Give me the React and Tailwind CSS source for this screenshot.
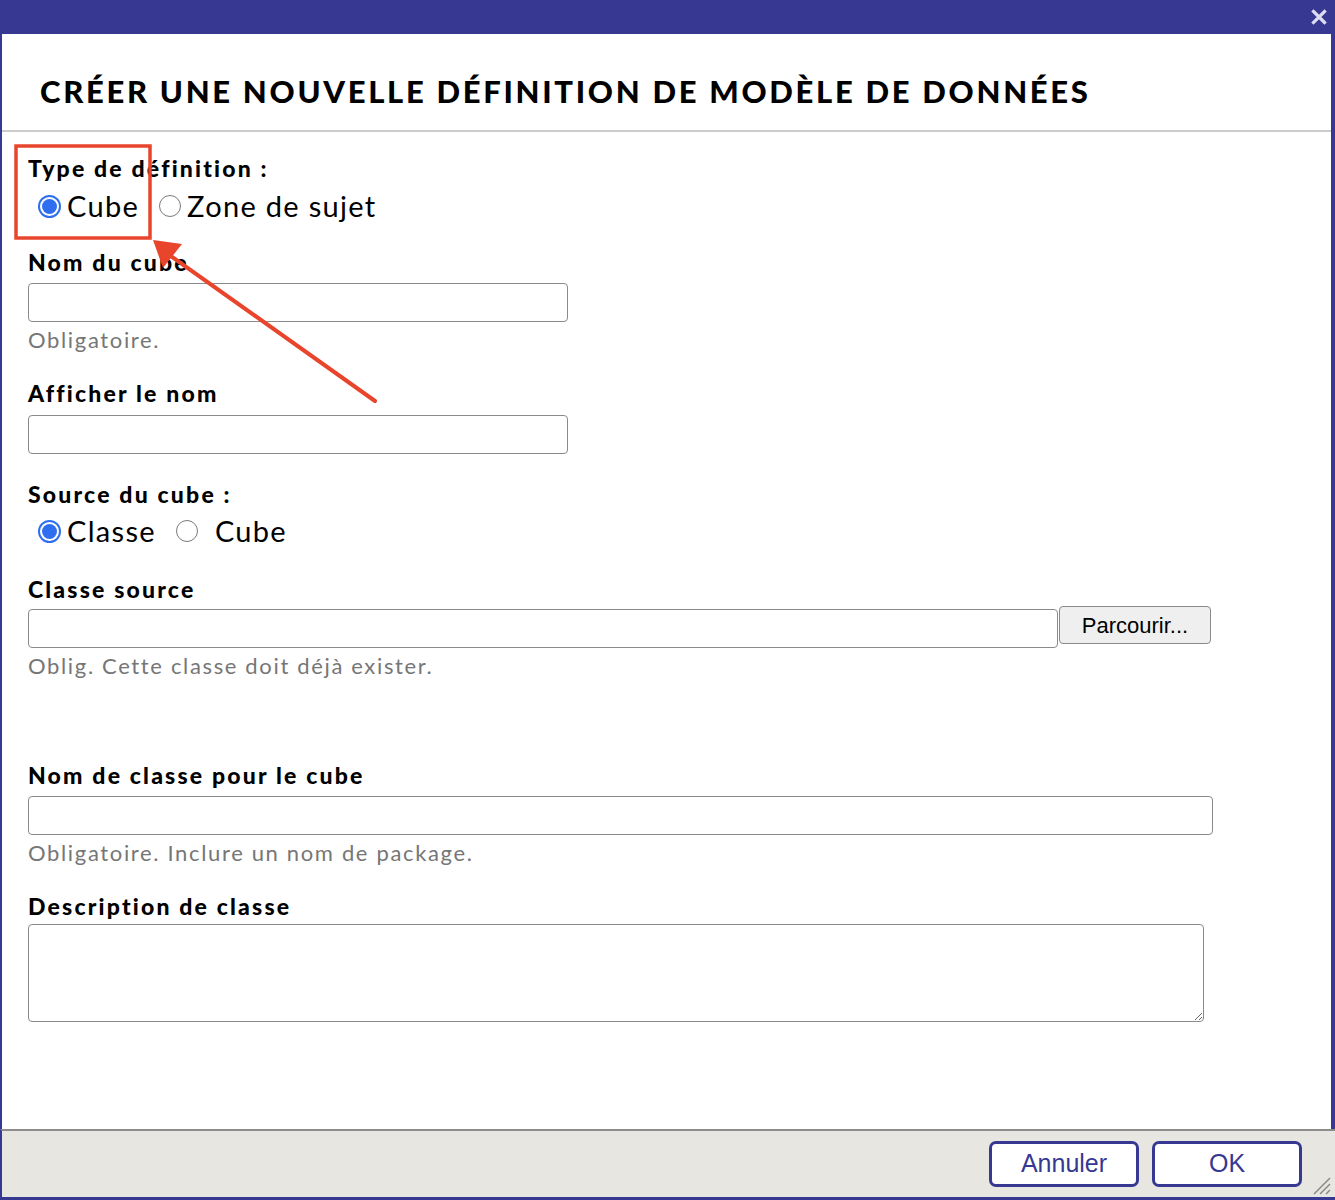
import React from 'react';

function Radio({ checked }) {
  if (checked) {
    return (
      <span className="inline-flex h-[23px] w-[23px] shrink-0 items-center justify-center rounded-full border-2 border-[#2f6fef] bg-white">
        <span className="h-[15px] w-[15px] rounded-full bg-[#2f6fef]" />
      </span>
    );
  }
  return <span className="inline-block h-[22px] w-[22px] shrink-0 rounded-full border-[1.5px] border-[#7a7a7a] bg-white" />;
}

function Label({ children, className = '' }) {
  return <div className={`text-[23px] leading-[26px] font-black tracking-[0.095em] text-black ${className}`}>{children}</div>;
}

function Help({ children, className = '' }) {
  return <div className={`text-[22px] leading-[26px] tracking-[0.075em] text-[#767676] ${className}`}>{children}</div>;
}

function TextBox({ className = '' }) {
  return <input type="text" className={`block h-[39px] rounded-[4px] border border-[#8a8a8a] bg-white outline-none ${className}`} />;
}

function Annotation() {
  return (
    <svg className="pointer-events-none absolute left-0 top-0" width="1335" height="1200" viewBox="0 0 1335 1200">
      <rect x="16" y="146" width="134" height="92" fill="none" stroke="#e8452c" strokeWidth="3.5" />
      <line x1="375" y1="401" x2="168" y2="254" stroke="#e8452c" strokeWidth="4" strokeLinecap="round" />
      <polygon points="153,240 182,244 163,268" fill="#e8452c" />
    </svg>
  );
}

export default function App() {
  return (
    <div className="relative flex h-[1200px] w-[1335px] flex-col overflow-hidden bg-white" style={{ fontFamily: 'Lato, "DejaVu Sans", sans-serif' }}>
      <header className="flex h-[34px] shrink-0 items-center justify-end bg-[#363892] pr-[8px]">
        <svg width="16" height="16" viewBox="0 0 16 16">
          <path d="M2.5 2.5 L13.5 13.5 M13.5 2.5 L2.5 13.5" stroke="#dcdcf0" strokeWidth="3.2" strokeLinecap="square" />
        </svg>
      </header>

      <div className="flex flex-1 flex-col border-l-2 border-r-[4px] border-[#363892]">
        <div className="flex h-[98px] shrink-0 items-end border-b-2 border-[#cccccc] pb-[22px] pl-[38px]">
          <h1 className="text-[31px] leading-[34px] font-black tracking-[0.087em] text-black">
            CRÉER UNE NOUVELLE DÉFINITION DE MODÈLE DE DONNÉES
          </h1>
        </div>

        <div className="flex flex-1 flex-col pl-[26px] pt-[23px]">
          <Label>Type de définition :</Label>
          <div className="mt-[7px] flex h-[36px] items-center pl-[10px] text-[29px] tracking-[0.045em] text-black">
            <Radio checked />
            <span className="ml-[6px]">Cube</span>
            <span className="ml-[20px]"><Radio /></span>
            <span className="ml-[6px]">Zone de sujet</span>
          </div>

          <Label className="mt-[25px]">Nom du cube</Label>
          <TextBox className="mt-[8px] w-[540px]" />
          <Help className="mt-[5px]">Obligatoire.</Help>

          <Label className="mt-[27px]">Afficher le nom</Label>
          <TextBox className="mt-[9px] w-[540px]" />

          <Label className="mt-[27px]">Source du cube :</Label>
          <div className="mt-[6px] flex h-[36px] items-center pl-[10px] text-[29px] tracking-[0.045em] text-black">
            <Radio checked />
            <span className="ml-[6px]">Classe</span>
            <span className="ml-[20px]"><Radio /></span>
            <span className="ml-[17px]">Cube</span>
          </div>

          <Label className="mt-[27px]">Classe source</Label>
          <div className="mt-[4px] flex items-start">
            <TextBox className="mt-[3px] w-[1030px]" />
            <button
              className="ml-[1px] h-[38px] w-[152px] rounded-[4px] border border-[#8a8a8a] bg-[#efefef] text-[22px] text-black"
              style={{ fontFamily: '"Liberation Sans", Arial, sans-serif' }}
            >
              Parcourir...
            </button>
          </div>
          <Help className="mt-[5px]">Oblig. Cette classe doit déjà exister.</Help>

          <Label className="mt-[83px]">Nom de classe pour le cube</Label>
          <TextBox className="mt-[8px] w-[1185px]" />
          <Help className="mt-[5px]">Obligatoire. Inclure un nom de package.</Help>

          <Label className="mt-[27px]">Description de classe</Label>
          <textarea className="mt-[5px] block h-[98px] w-[1176px] rounded-[4px] border border-[#8a8a8a] bg-white outline-none" />
        </div>
      </div>

      <footer className="relative flex h-[71px] shrink-0 items-start justify-end gap-[13px] border-b-[3px] border-l-2 border-t-2 border-b-[#363892] border-l-[#363892] border-t-[#8c8c8c] bg-[#e8e6e1] pr-[33px] pt-[10px]">
        {['Annuler', 'OK'].map((t) => (
          <button
            key={t}
            className="h-[46px] w-[150px] rounded-[7px] border-[3px] border-[#363892] bg-white text-[25px] text-[#363892]"
            style={{ fontFamily: '"Liberation Sans", Arial, sans-serif' }}
          >
            {t}
          </button>
        ))}
        <svg className="absolute bottom-[2px] right-[4px]" width="22" height="22" viewBox="0 0 22 22">
          <path d="M21 5 L5 21 M21 11 L11 21 M21 17 L17 21" stroke="#8a8a8a" strokeWidth="1.5" />
        </svg>
      </footer>

      <Annotation />
    </div>
  );
}
